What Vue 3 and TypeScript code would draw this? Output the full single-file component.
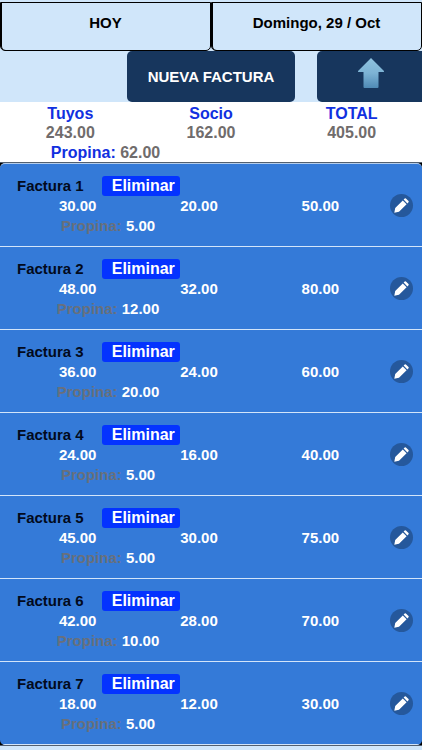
<script setup lang="ts">
import { computed, ref } from 'vue'

interface Invoice {
  id: number
  mine: number
  partner: number
  tip: number
}

const invoices = ref<Invoice[]>([
  { id: 1, mine: 30, partner: 20, tip: 5 },
  { id: 2, mine: 48, partner: 32, tip: 12 },
  { id: 3, mine: 36, partner: 24, tip: 20 },
  { id: 4, mine: 24, partner: 16, tip: 5 },
  { id: 5, mine: 45, partner: 30, tip: 5 },
  { id: 6, mine: 42, partner: 28, tip: 10 },
  { id: 7, mine: 18, partner: 12, tip: 5 },
])

const sum = (pick: (i: Invoice) => number) =>
  invoices.value.reduce((total, i) => total + pick(i), 0)

const mine = computed(() => sum((i) => i.mine))
const partner = computed(() => sum((i) => i.partner))
const tips = computed(() => sum((i) => i.tip))

const money = (n: number) => n.toFixed(2)

function remove(id: number) {
  invoices.value = invoices.value.filter((i) => i.id !== id)
}
</script>

<template>
  <div class="page">
    <nav class="tabs">
      <button type="button" class="tab">HOY</button>
      <button type="button" class="tab">Domingo, 29 / Oct</button>
    </nav>

    <div class="toolbar">
      <button type="button" class="action create">NUEVA FACTURA</button>
      <button type="button" class="action upload" aria-label="Subir">
        <svg width="28" height="32" viewBox="0 0 28 32" aria-hidden="true">
          <defs>
            <linearGradient id="arrow-fill" x1="0" y1="0" x2="0" y2="1">
              <stop offset="0" stop-color="#8fc3df" />
              <stop offset="0.5" stop-color="#7db3d5" />
              <stop offset="1" stop-color="#4f8ab5" />
            </linearGradient>
          </defs>
          <path
            d="M14 1 L27 14 Q27.300 15 26.500 15 H21.500 V30 Q21.500 31 20.500 31 H7.500 Q6.500 31 6.500 30 V15 H1.500 Q0.700 15 1 14 Z"
            fill="url(#arrow-fill)"
          />
        </svg>
      </button>
    </div>

    <section class="summary">
      <div class="thirds">
        <div><span class="label">Tuyos</span><br />{{ money(mine) }}</div>
        <div><span class="label">Socio</span><br />{{ money(partner) }}</div>
        <div><span class="label">TOTAL</span><br />{{ money(mine + partner) }}</div>
      </div>
      <div class="half"><span class="label">Propina:</span> {{ money(tips) }}</div>
    </section>

    <div class="list-frame">
      <ul class="list">
        <li v-for="invoice in invoices" :key="invoice.id" class="invoice">
          <div class="body">
            <div class="head">
              <span class="name">Factura {{ invoice.id }}</span>
              <button type="button" class="remove" @click="remove(invoice.id)">Eliminar</button>
            </div>
            <div class="thirds">
              <div>{{ money(invoice.mine) }}</div>
              <div>{{ money(invoice.partner) }}</div>
              <div>{{ money(invoice.mine + invoice.partner) }}</div>
            </div>
            <div class="half"><span class="tip">Propina:</span> {{ money(invoice.tip) }}</div>
          </div>
          <button type="button" class="edit" :aria-label="`Editar factura ${invoice.id}`">
            <svg width="15" height="15" viewBox="0 0 15 15" aria-hidden="true">
              <path
                d="M0.300 14.700 L1.200 10 L8.800 2.400 L12.600 6.200 L5 13.800 Z M9.600 1.600 L10.700 0.500 Q11.300 0 11.900 0.500 L14.500 3.100 Q15 3.700 14.500 4.300 L13.400 5.400 Z"
                fill="#fff"
              />
            </svg>
          </button>
        </li>
      </ul>
    </div>
  </div>
</template>

<style>
body {
  margin: 0;
  background: #d0e6fa;
}
</style>

<style scoped>
.page {
  padding-top: 2px;
  font-family: 'Liberation Sans', Arial, sans-serif;
  font-weight: bold;
  font-size: 15px;
  color: #000;
}

button {
  margin: 0;
  padding: 0;
  border: 0;
  font: inherit;
  color: inherit;
  cursor: pointer;
}

.tabs {
  display: grid;
  grid-template-columns: 1fr 1fr;
}

.tab {
  height: 49px;
  padding-bottom: 8px;
  border: 1px solid #000;
  border-radius: 0 0 5px 5px;
  box-shadow: inset 1px 0 #000;
  background: #d0e6fa;
}

.toolbar {
  display: grid;
  grid-template-columns: 40% 25%;
  column-gap: 5%;
  justify-content: end;
}

.action {
  display: flex;
  align-items: center;
  justify-content: center;
  height: 51px;
  border-radius: 5px;
  background: #17365d;
  color: #fff;
}

.upload {
  padding: 0 0 8px 4px;
  border-radius: 5px 0 0 5px;
}

.summary {
  height: 60px;
  padding-top: 2px;
  box-sizing: border-box;
  background: #fff;
  color: #706c6c;
  font-size: 16px;
  line-height: 19px;
}

.label {
  color: #1130e0;
}

.thirds {
  display: grid;
  grid-template-columns: repeat(3, 1fr);
  text-align: center;
}

.half {
  width: 50%;
  text-align: center;
  white-space: nowrap;
}

.summary .half {
  line-height: 21px;
}

.list-frame {
  border-top: 1px solid #53606f;
  border-bottom: 1px solid #53606f;
  background: #000;
}

.list {
  margin: 0;
  padding: 0;
  list-style: none;
  border-top: 1px solid #b4cdec;
  border-radius: 5px;
  overflow: hidden;
  background: #347ad8;
}

.invoice {
  display: flex;
  align-items: center;
  box-sizing: border-box;
  height: 83px;
  padding: 0 9px 0 17px;
  border-bottom: 1px solid #d3e5fa;
  color: #fff;
}

.body {
  flex: 1;
  padding: 2px 9px 0 0;
  line-height: 20px;
}

.head {
  display: flex;
  align-items: center;
  gap: 18px;
  color: #020a1c;
}

.remove {
  padding: 0 5px 0 10px;
  border-radius: 3px;
  background: #0433ff;
  color: #fff;
  font-size: 16px;
  line-height: 20px;
}

.tip {
  color: #68707c;
}

.edit {
  display: flex;
  align-items: center;
  justify-content: center;
  width: 23px;
  height: 23px;
  border-radius: 50%;
  background: #25589c;
}
</style>
